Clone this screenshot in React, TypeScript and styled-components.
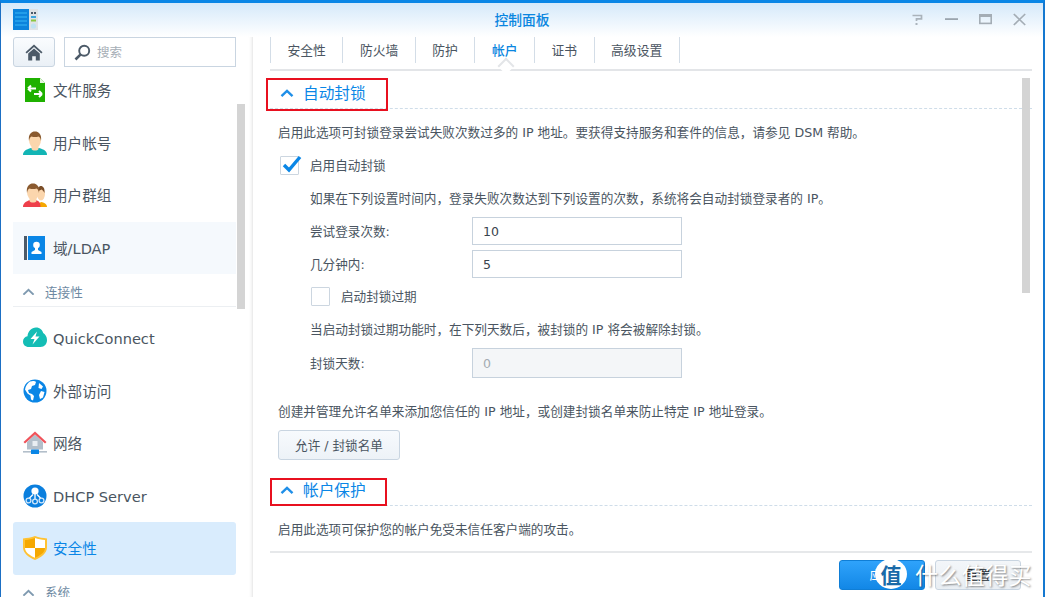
import React from "react";
import styled, { createGlobalStyle } from "styled-components";

const FONT = `"DejaVu Sans", "Noto Sans CJK SC", sans-serif`;

const Global = createGlobalStyle`
  html, body { margin: 0; padding: 0; background: #fff; }
  body { font-family: ${FONT}; overflow: hidden; }
  * { box-sizing: border-box; }
`;

const Window = styled.div`
  position: relative;
  width: 1045px;
  height: 597px;
  display: flex;
  flex-direction: column;
  overflow: hidden;
  background: #fff;
  border-top: 3px solid #0a86e6;
  border-left: 1px solid #1b6fc4;
  border-right: 2px solid #1478d0;
`;

const TitleBar = styled.header`
  height: 34px;
  flex: none;
  display: grid;
  grid-template-columns: 1fr auto 1fr;
  align-items: center;
  padding: 0 17px 0 12px;
  background: linear-gradient(#d5e9fa, #ffffff);
`;

const Title = styled.div`
  font-size: 13.8px;
  line-height: 20px;
  font-weight: 500;
  color: #0a86e0;
  text-align: center;
  margin-left: 5px;
  margin-top: -1px;
`;

const Controls = styled.div`
  display: flex;
  justify-content: flex-end;
  align-items: center;
  gap: 21px;
  margin-top: -1px;
`;

const Body = styled.div`
  flex: 1;
  min-height: 0;
  display: flex;
`;

const Sidebar = styled.aside`
  position: relative;
  width: 252px;
  flex: none;
  display: flex;
  flex-direction: column;
  padding-left: 12px;
  border-right: 1px solid #ececec;
  box-shadow: inset -3px 0 3px -2px #f0f0f0;
`;

const SearchRow = styled.div`
  width: 223px;
  height: 30px;
  flex: none;
  display: flex;
  gap: 9px;
`;

const HomeButton = styled.button`
  width: 42px;
  height: 30px;
  padding: 0;
  display: flex;
  align-items: center;
  justify-content: center;
  border: 1px solid #c9d5e1;
  border-radius: 3px;
  background: linear-gradient(#fafcfe, #eaf0f6);
`;

const SearchBox = styled.div`
  flex: 1;
  display: flex;
  align-items: center;
  gap: 6px;
  padding-left: 9px;
  border: 1px solid #c9d5e1;
  color: #a6aeb6;
  font-size: 12.5px;
  line-height: 20px;
`;

const TextNudge = styled.span`
  padding-top: 2px;
`;

const Scroller = styled.div`
  flex: 1;
  min-height: 0;
  margin-top: 3px;
  overflow: hidden;
  width: 224px;
`;

const ScrollInner = styled.div`
  margin-top: -6px;
  width: 223px;
`;

const NavItem = styled.div<{ $state?: "hover" | "active" }>`
  height: 52.5px;
  display: flex;
  align-items: center;
  gap: 6px;
  padding-left: 10px;
  font-size: 14.6px;
  line-height: 20px;
  color: ${(p) => (p.$state === "active" ? "#0a86e6" : "#4a5561")};
  background: ${(p) =>
    p.$state === "active" ? "#d9ecfd" : p.$state === "hover" ? "#f5f9fd" : "transparent"};
  border-radius: ${(p) => (p.$state === "active" ? "3px" : "0")};
`;

const IconSlot = styled.span`
  width: 24px;
  height: 24px;
  flex: none;
  display: block;
`;

const NavGroup = styled.div<{ $line?: boolean }>`
  height: 33px;
  display: flex;
  align-items: center;
  gap: 10px;
  padding: 3px 0 0 9px;
  margin-bottom: 5px;
  font-size: 12.6px;
  line-height: 20px;
  color: #6e8aa3;
  border-bottom: ${(p) => (p.$line ? "1px solid #eceff2" : "none")};
`;

const SideThumb = styled.div`
  position: absolute;
  left: 236px;
  top: 67px;
  width: 8px;
  height: 205px;
  background: #d4d4d4;
`;

const Main = styled.main`
  position: relative;
  flex: 1;
  min-width: 0;
  display: flex;
  flex-direction: column;
  padding: 0 11px 0 17px;
`;

const Tabs = styled.nav`
  height: 34px;
  flex: none;
  display: flex;
  align-items: flex-start;
  border-bottom: 2px solid #e3e5e8;
`;

const Tab = styled.div<{ $active?: boolean; $last?: boolean }>`
  position: relative;
  height: 26px;
  display: flex;
  align-items: center;
  padding: 2px 16.5px 0;
  font-size: 12.8px;
  line-height: 20px;
  font-weight: ${(p) => (p.$active ? 500 : 400)};
  color: ${(p) => (p.$active ? "#0a86e0" : "#4a5561")};
  border-left: 1px solid #d3dde7;
  border-right: ${(p) => (p.$last ? "1px solid #d3dde7" : "none")};
  ${(p) =>
    p.$active
      ? `&::after {
    content: "";
    position: absolute;
    left: 50%;
    bottom: -9px;
    width: 10px;
    height: 10px;
    margin-left: -5px;
    background: #fff;
    border-top: 2px solid #e3e5e8;
    border-left: 2px solid #e3e5e8;
    transform: rotate(45deg);
  }`
      : ""}
`;

const Content = styled.div`
  flex: 1;
  min-height: 0;
  overflow: hidden;
  display: flex;
  flex-direction: column;
`;

const SectionHeader = styled.div<{ $top: number }>`
  height: 26px;
  flex: none;
  margin-top: ${(p) => p.$top}px;
  display: flex;
  align-items: center;
  gap: 9px;
  padding: 0 0 4px 10px;
  font-size: 15.7px;
  line-height: 20px;
  color: #0a86e6;
  border-bottom: 1px dashed #cfdde9;
`;

const Line = styled.div<{ $top: number; $indent?: boolean }>`
  height: 20px;
  line-height: 22px;
  flex: none;
  margin: ${(p) => p.$top}px 0 0 ${(p) => (p.$indent ? 40 : 8)}px;
  font-size: 12.65px;
  color: #4a5561;
  white-space: nowrap;
`;

const CheckRow = styled.label<{ $top: number; $left: number; $gap: number }>`
  height: 20px;
  flex: none;
  display: flex;
  align-items: center;
  gap: ${(p) => p.$gap}px;
  margin: ${(p) => p.$top}px 0 0 ${(p) => p.$left}px;
  font-size: 12.6px;
  line-height: 20px;
  color: #4a5561;
`;

const CheckBox = styled.span`
  position: relative;
  width: 19px;
  height: 19px;
  flex: none;
  display: block;
  border: 1px solid #ccd6e0;
  border-radius: 1px;
  background: #fff;
`;

const CheckMark = styled.svg`
  position: absolute;
  left: 0;
  top: -3px;
`;

const Field = styled.div<{ $top: number; $height: number }>`
  height: ${(p) => p.$height}px;
  flex: none;
  display: flex;
  align-items: center;
  margin: ${(p) => p.$top}px 0 0 40px;
  font-size: 12.6px;
  line-height: 20px;
  color: #4a5561;
`;

const FieldLabel = styled.span`
  width: 162px;
  flex: none;
  padding-top: 2px;
`;

const Input = styled.div<{ $disabled?: boolean }>`
  width: 210px;
  height: 100%;
  display: flex;
  align-items: center;
  padding: 2px 0 0 10px;
  font-size: 12.5px;
  border: 1px solid #c7d2dd;
  color: ${(p) => (p.$disabled ? "#a4abb2" : "#39434d")};
  background: ${(p) => (p.$disabled ? "#f4f6f8" : "#fff")};
`;

const PlainButton = styled.button`
  width: 122px;
  height: 30px;
  flex: none;
  margin: 9px 0 0 8px;
  padding: 2px 0 0;
  font-family: ${FONT};
  font-size: 12.6px;
  line-height: 20px;
  color: #4a5561;
  border: 1px solid #c9d5e1;
  border-radius: 3px;
  background: linear-gradient(#f7fafd, #edf2f7);
`;

const Footer = styled.footer`
  height: 46px;
  flex: none;
  display: flex;
  justify-content: flex-end;
  gap: 10px;
  padding: 7px 11px 0 0;
  border-top: 2px solid #e6e8ea;
`;

const FootButton = styled.button<{ $primary?: boolean }>`
  width: 86px;
  height: 30px;
  padding: 2px 0 0;
  font-family: ${FONT};
  font-size: 12.5px;
  line-height: 20px;
  border-radius: 3px;
  color: ${(p) => (p.$primary ? "#fff" : "#27313b")};
  border: 1px solid ${(p) => (p.$primary ? "#0f7ed6" : "#c9d5e1")};
  background: ${(p) =>
    p.$primary ? "linear-gradient(#2fa3fb, #1287e6)" : "linear-gradient(#f3f6f9, #e9eef3)"};
`;

const MainThumb = styled.div`
  position: absolute;
  right: 13px;
  top: 41px;
  width: 8px;
  height: 215px;
  background: #d4d4d4;
`;

const RedBox = styled.div<{ $x: number; $y: number; $w: number; $h: number }>`
  position: absolute;
  left: ${(p) => p.$x}px;
  top: ${(p) => p.$y}px;
  width: ${(p) => p.$w}px;
  height: ${(p) => p.$h}px;
  border: 2px solid #e8101f;
  pointer-events: none;
`;

const Watermark = styled.div`
  position: absolute;
  left: 874px;
  top: 554px;
  display: flex;
  align-items: center;
  gap: 8px;
  pointer-events: none;
`;

const WatermarkBadge = styled.span`
  width: 32px;
  height: 30px;
  border-radius: 50%;
  background: #fff;
  display: flex;
  align-items: center;
  justify-content: center;
  font-family: "Noto Sans CJK SC", sans-serif;
  font-size: 21px;
  font-weight: 700;
  color: #1a6aa8;
`;

const WatermarkText = styled.span`
  font-family: "Noto Sans CJK SC", sans-serif;
  font-size: 23px;
  letter-spacing: 0.4px;
  color: #fff;
  text-shadow: 1px 1px 2px rgba(0, 0, 0, 0.45);
`;

const Chevron = ({ size, color, width }: { size: number; color: string; width: number }) => (
  <svg width={size} height={size * 0.6} viewBox="0 0 14 8" style={{ flex: "none" }}>
    <polyline points="1.5,7 7,1.8 12.5,7" fill="none" stroke={color} strokeWidth={width} />
  </svg>
);

const Logo = () => (
  <svg width="25" height="22" viewBox="0 0 25 22" style={{ display: "block", marginTop: "-1px" }}>
    <rect x="0" y="0" width="16" height="21" fill="#0b83dc" />
    <rect x="16" y="0" width="9" height="21" fill="#dfe3e6" />
    <path d="M2 4h12M2 8h12M2 12h12M2 16h12" stroke="#39b7f7" strokeWidth="1" />
    <rect x="18" y="3" width="2" height="2" fill="#4c5a68" />
    <rect x="21" y="3" width="2" height="2" fill="#4c5a68" />
    <rect x="18" y="7" width="5" height="2" fill="#3fa5dd" />
    <rect x="18" y="10.5" width="5" height="2" fill="#8cc63f" />
    <circle cx="20.5" cy="17" r="2.6" fill="#bfe2f2" />
  </svg>
);

const Help = () => (
  <svg width="13" height="13" viewBox="0 0 13 13">
    <path d="M1.5 2.5h9v3.4h-5v2.2" fill="none" stroke="#aab3bb" strokeWidth="1.7" />
    <rect x="4.5" y="10" width="2" height="2" fill="#aab3bb" />
  </svg>
);
const Minimize = () => (
  <svg width="13" height="13" viewBox="0 0 13 13">
    <rect x="0" y="5.2" width="13" height="1.8" fill="#9ba5ae" />
  </svg>
);
const Maximize = () => (
  <svg width="13" height="13" viewBox="0 0 13 13">
    <rect x="0.8" y="1.8" width="11.4" height="8.6" fill="none" stroke="#a4adb5" strokeWidth="1.6" />
    <rect x="0" y="1" width="13" height="3" fill="#a4adb5" />
  </svg>
);
const Close = () => (
  <svg width="13" height="13" viewBox="0 0 13 13">
    <path d="M0.8 1l11.4 11M12.2 1L0.8 12" stroke="#a4adb5" strokeWidth="1.7" />
  </svg>
);

const HomeIcon = () => (
  <svg width="18" height="17" viewBox="0 0 18 17">
    <path d="M9 0.5L0.5 8.2l1.2 1.2L9 3l7.3 6.4 1.2-1.2z" fill="#4c5a68" />
    <path d="M3.2 9.6L9 4.6l5.8 5V16.5h-4v-4.2H7.2v4.2h-4z" fill="#4c5a68" />
  </svg>
);

const SearchIcon = () => (
  <svg width="17" height="17" viewBox="0 0 17 17" style={{ flex: "none" }}>
    <circle cx="10.2" cy="6.8" r="5" fill="none" stroke="#4c5a68" strokeWidth="1.9" />
    <path d="M6.4 10.6L1.5 15.5" stroke="#4c5a68" strokeWidth="2.6" />
  </svg>
);

const FileIcon = () => (
  <svg viewBox="0 0 24 24" width="24" height="24">
    <path d="M2 0h15l5 5v19H2z" fill="#1fb100" />
    <path d="M17 0l5 5h-5z" fill="#e6f6df" />
    <path d="M5 10.500h8M5 10.500l3-3M5 10.500l3 3M19 16h-8M19 16l-3-3M19 16l-3 3" fill="none" stroke="#fff" strokeWidth="2" />
  </svg>
);

const UserIcon = () => (
  <svg viewBox="0 0 24 24" width="24" height="24">
    <path d="M0 24c0-4 3-5.500 8-7h8c5 1.500 8 3 8 7z" fill="#12b5b5" />
    <path d="M8.500 14h7v4c-1 2-6 2-7 0z" fill="#fbd6ad" />
    <ellipse cx="12" cy="9" rx="6" ry="8" fill="#fbd6ad" />
    <path d="M6 10C5 3 8.500 0.500 12 0.500S19 3 18 10c-.5-3-1.500-4-2.500-4.500-2 .8-5 .8-7 0C7.500 6 6.500 7 6 10z" fill="#8a5a2f" />
  </svg>
);

const GroupIcon = () => (
  <svg viewBox="0 0 24 24" width="24" height="24">
    <path d="M15 24c0-2 1-4 3-5 3 .5 6 2 6 5z" fill="#f5a700" />
    <ellipse cx="18" cy="11" rx="4" ry="6.500" fill="#fbd6ad" />
    <path d="M14 9c0-4 2-6 4-6s4 2 3.500 7c-1-2-2-3-3-3.500-1 .5-3 1-4.500 2.500z" fill="#7a4d28" />
    <path d="M0 24c0-4 3-5.500 7-7h6c3 1 4.500 2.500 4.500 7z" fill="#ee3f4a" />
    <path d="M6.500 14h7v4c-1 2-6 2-7 0z" fill="#fbd6ad" />
    <ellipse cx="10" cy="9" rx="6" ry="8" fill="#fbd6ad" />
    <path d="M4 10C3 3 6.500 0.500 10 0.500S17 3 16 10c-.5-3-1.500-4-2.500-4.500-2 .8-5 .8-7 0C5.500 6 4.500 7 4 10z" fill="#8a5a2f" />
  </svg>
);

const BookIcon = () => (
  <svg viewBox="0 0 24 24" width="24" height="24">
    <rect x="1" y="0" width="3" height="24" fill="#4c5a68" />
    <rect x="5" y="0" width="17" height="24" fill="#0a86e6" />
    <circle cx="13.500" cy="9" r="3.300" fill="#fff" />
    <path d="M12 11.500h3v2.500l3.500 2v2h-10v-2l3.500-2z" fill="#fff" />
  </svg>
);

const CloudIcon = () => (
  <svg viewBox="0 0 24 24" width="24" height="24">
    <path d="M6 21C2 21 0 18.500 0 15.500c0-3 2-5 4.500-5.300C5 5 8.500 1.500 13 1.500c4 0 6.500 2.500 7.200 5.500C22.500 8.500 24 11 24 14c0 4-2.500 7-6.500 7z" fill="#14bdb5" />
    <path d="M14 5.500L7.500 13h4L9.500 18.500 16.500 10.500h-4z" fill="#fff" />
  </svg>
);

const GlobeIcon = () => (
  <svg viewBox="0 0 24 24" width="24" height="24">
    <circle cx="12" cy="12" r="11.500" fill="#0a86e6" />
    <path d="M7 2.500c3-1 5-.5 6 .5l-1 3-3 1-1 3-3 1 1 3 3 1 2 2-1 4.500-2-1-.5-4-3-2-2.500-4c.5-3.500 2.500-6.500 5.500-8.500z" fill="#fff" />
    <path d="M16 4l4 3.500-1.500 2.500-3-1zM18 12l3.500 1-1.500 5.500-3 1.500-1-4z" fill="#fff" />
  </svg>
);

const HouseIcon = () => (
  <svg viewBox="0 0 24 24" width="24" height="24">
    <path d="M4 11L12 3.500 20 11v7.500H4z" fill="#b3bfca" />
    <path d="M0.500 11L12 0.500 23.500 11l-1.500 1.600L12 3.500 2 12.600z" fill="#f0535a" />
    <rect x="9.500" y="10" width="5" height="5" fill="#e9eef2" />
    <rect x="0" y="20" width="24" height="1.600" fill="#b3bfca" />
    <rect x="8" y="18.500" width="8" height="4.500" rx="0.500" fill="#0a86e6" />
  </svg>
);

const DhcpIcon = () => (
  <svg viewBox="0 0 24 24" width="24" height="24">
    <circle cx="12" cy="12" r="11.500" fill="#0a7fde" />
    <circle cx="12" cy="7" r="3.600" fill="#fff" />
    <path d="M12 10v5M10 10.500L6 14.500M14 10.500l4 4" stroke="#fff" strokeWidth="1.300" />
    <circle cx="5.500" cy="16.500" r="2.400" fill="none" stroke="#cfe6fa" strokeWidth="1.300" />
    <circle cx="12" cy="17.500" r="2.400" fill="none" stroke="#cfe6fa" strokeWidth="1.300" />
    <circle cx="18.500" cy="16.500" r="2.400" fill="none" stroke="#cfe6fa" strokeWidth="1.300" />
  </svg>
);

const ShieldIcon = () => (
  <svg viewBox="0 0 24 24" width="24" height="24">
    <path d="M0 2.500C4 2 8 1.500 12 0c4 1.500 8 2 12 2.500v9C24 17 18 21.500 12 24 6 21.500 0 17 0 11.500z" fill="#ffc233" />
    <path d="M2 4c3.500-.4 7-1 10-2v10H2z" fill="#f5a800" />
    <path d="M12 2c3 1 6.500 1.600 10 2v8H12z" fill="#fff" />
    <path d="M2 12h10v9.800C7 19.500 2 16.500 2 12z" fill="#fff" />
    <path d="M12 12h10c0 4.500-5 7.500-10 9.800z" fill="#f5a800" />
  </svg>
);

const nav = (
  icon: React.ReactNode,
  label: string,
  state?: "hover" | "active",
) => (
  <NavItem $state={state} key={label}>
    <IconSlot>{icon}</IconSlot>
    <TextNudge>{label}</TextNudge>
  </NavItem>
);

export default function App() {
  return (
    <Window>
      <Global />
      <TitleBar>
        <Logo />
        <Title>控制面板</Title>
        <Controls>
          <Help />
          <Minimize />
          <Maximize />
          <Close />
        </Controls>
      </TitleBar>
      <Body>
        <Sidebar>
          <SearchRow>
            <HomeButton>
              <HomeIcon />
            </HomeButton>
            <SearchBox>
              <SearchIcon />
              <TextNudge>搜索</TextNudge>
            </SearchBox>
          </SearchRow>
          <Scroller>
            <ScrollInner>
              {nav(<FileIcon />, "文件服务")}
              {nav(<UserIcon />, "用户帐号")}
              {nav(<GroupIcon />, "用户群组")}
              {nav(<BookIcon />, "域/LDAP", "hover")}
              <NavGroup $line>
                <Chevron size={13} color="#7f9ab0" width={2} />
                <TextNudge>连接性</TextNudge>
              </NavGroup>
              {nav(<CloudIcon />, "QuickConnect")}
              {nav(<GlobeIcon />, "外部访问")}
              {nav(<HouseIcon />, "网络")}
              {nav(<DhcpIcon />, "DHCP Server")}
              {nav(<ShieldIcon />, "安全性", "active")}
              <NavGroup>
                <Chevron size={13} color="#7f9ab0" width={2} />
                系统
              </NavGroup>
            </ScrollInner>
          </Scroller>
          <SideThumb />
        </Sidebar>
        <Main>
          <Tabs>
            <Tab>安全性</Tab>
            <Tab>防火墙</Tab>
            <Tab>防护</Tab>
            <Tab $active>帐户</Tab>
            <Tab>证书</Tab>
            <Tab $last>高级设置</Tab>
          </Tabs>
          <Content>
            <SectionHeader $top={12}>
              <Chevron size={14} color="#1f8fe8" width={2.4} />
              自动封锁
            </SectionHeader>
            <Line $top={13}>
              启用此选项可封锁登录尝试失败次数过多的 IP 地址。要获得支持服务和套件的信息，请参见 DSM 帮助。
            </Line>
            <CheckRow $top={13} $left={10} $gap={11}>
              <CheckBox>
                <CheckMark width="21" height="20" viewBox="0 0 21 20">
                  <path d="M3 11l5 5L19 3" fill="none" stroke="#0a86e6" strokeWidth="3.400" />
                </CheckMark>
              </CheckBox>
              <TextNudge>启用自动封锁</TextNudge>
            </CheckRow>
            <Line $top={13} $indent>
              如果在下列设置时间内，登录失败次数达到下列设置的次数，系统将会自动封锁登录者的 IP。
            </Line>
            <Field $top={9} $height={28}>
              <FieldLabel>尝试登录次数:</FieldLabel>
              <Input>10</Input>
            </Field>
            <Field $top={5} $height={28}>
              <FieldLabel>几分钟内:</FieldLabel>
              <Input>5</Input>
            </Field>
            <CheckRow $top={8} $left={41} $gap={11}>
              <CheckBox />
              <TextNudge>启动封锁过期</TextNudge>
            </CheckRow>
            <Line $top={13} $indent>
              当启动封锁过期功能时，在下列天数后，被封锁的 IP 将会被解除封锁。
            </Line>
            <Field $top={9} $height={30}>
              <FieldLabel>封锁天数:</FieldLabel>
              <Input $disabled>0</Input>
            </Field>
            <Line $top={23}>
              创建并管理允许名单来添加您信任的 IP 地址，或创建封锁名单来防止特定 IP 地址登录。
            </Line>
            <PlainButton>允许 / 封锁名单</PlainButton>
            <SectionHeader $top={20}>
              <Chevron size={14} color="#1f8fe8" width={2.4} />
              帐户保护
            </SectionHeader>
            <Line $top={13}>启用此选项可保护您的帐户免受未信任客户端的攻击。</Line>
          </Content>
          <Footer>
            <FootButton $primary>应用</FootButton>
            <FootButton>重置</FootButton>
          </Footer>
          <MainThumb />
        </Main>
      </Body>
      <RedBox $x={265} $y={75} $w={122} $h={33} />
      <RedBox $x={269} $y={475} $w={117} $h={28} />
      <Watermark>
        <WatermarkBadge>值</WatermarkBadge>
        <WatermarkText>什么值得买</WatermarkText>
      </Watermark>
    </Window>
  );
}
